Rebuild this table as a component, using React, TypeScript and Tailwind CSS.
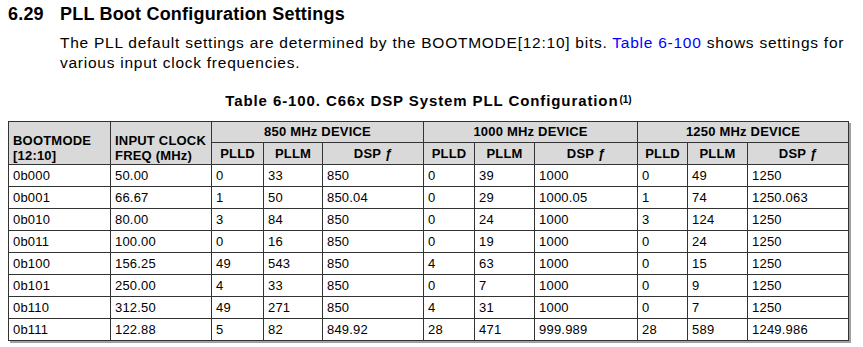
import React from "react";

const rows: string[][] = [
  ["0b000", "50.00", "0", "33", "850", "0", "39", "1000", "0", "49", "1250"],
  ["0b001", "66.67", "1", "50", "850.04", "0", "29", "1000.05", "1", "74", "1250.063"],
  ["0b010", "80.00", "3", "84", "850", "0", "24", "1000", "3", "124", "1250"],
  ["0b011", "100.00", "0", "16", "850", "0", "19", "1000", "0", "24", "1250"],
  ["0b100", "156.25", "49", "543", "850", "4", "63", "1000", "0", "15", "1250"],
  ["0b101", "250.00", "4", "33", "850", "0", "7", "1000", "0", "9", "1250"],
  ["0b110", "312.50", "49", "271", "850", "4", "31", "1000", "0", "7", "1250"],
  ["0b111", "122.88", "5", "82", "849.92", "28", "471", "999.989", "28", "589", "1249.986"],
];

const widths = [102, 101, 52, 59, 101, 51, 60, 103, 50, 60, 101];

function DspF() {
  return (
    <>
      DSP <i className="font-bold">ƒ</i>
    </>
  );
}

export default function App() {
  const th = "border border-[#333] bg-[#d9d9d9] font-bold text-[13px] text-black";
  return (
    <div
      className="w-[863px] h-[347px] bg-white text-black overflow-hidden px-2"
      style={{ fontFamily: '"Liberation Sans", Arial, sans-serif' }}
    >
      <h2 className="flex pt-[2px] text-[18px] leading-6 font-bold tracking-[0.2px]">
        <span className="w-[52px]">6.29</span>
        <span>PLL Boot Configuration Settings</span>
      </h2>
      <p className="mt-[7px] ml-[52px] text-[15.5px] leading-5 tracking-[0.75px] whitespace-nowrap">
        The PLL default settings are determined by the BOOTMODE[12:10] bits.{" "}
        <span className="text-[#0000ff]">Table 6-100</span> shows settings for
        <br />
        various input clock frequencies.
      </p>
      <div className="mt-[18px] w-[841px] text-center text-[15px] leading-5 font-bold tracking-[0.9px] whitespace-nowrap">
        Table 6-100. C66x DSP System PLL Configuration
        <sup className="text-[10px] tracking-normal relative -top-[3px] ml-[1px]">(1)</sup>
      </div>
      <div className="mt-[10px] inline-block shadow-[2px_2px_0_0_#a0a0a0]">
        <table className="table-fixed border-collapse w-[841px] text-[13px] tracking-[0.2px]">
          <colgroup>
            {widths.map((w, i) => (
              <col key={i} style={{ width: w }} />
            ))}
          </colgroup>
          <thead>
            <tr className="h-[21px]">
              <th rowSpan={2} className={`${th} text-left align-bottom leading-[15px] px-1 pb-[1px]`}>
                BOOTMODE
                <br />
                [12:10]
              </th>
              <th rowSpan={2} className={`${th} text-left align-bottom leading-[15px] px-1 pb-[1px]`}>
                INPUT CLOCK
                <br />
                FREQ (MHz)
              </th>
              <th colSpan={3} className={`${th} text-center`}>850 MHz DEVICE</th>
              <th colSpan={3} className={`${th} text-center`}>1000 MHz DEVICE</th>
              <th colSpan={3} className={`${th} text-center`}>1250 MHz DEVICE</th>
            </tr>
            <tr className="h-[22px]">
              {[0, 1, 2].map((g) => (
                <React.Fragment key={g}>
                  <th className={`${th} text-center`}>PLLD</th>
                  <th className={`${th} text-center`}>PLLM</th>
                  <th className={`${th} text-center`}>
                    <DspF />
                  </th>
                </React.Fragment>
              ))}
            </tr>
          </thead>
          <tbody>
            {rows.map((r, i) => (
              <tr key={i} className="h-[22px]">
                {r.map((c, j) => (
                  <td key={j} className="border border-[#333] px-1 text-left align-middle leading-4">
                    {c}
                  </td>
                ))}
              </tr>
            ))}
          </tbody>
        </table>
      </div>
    </div>
  );
}
